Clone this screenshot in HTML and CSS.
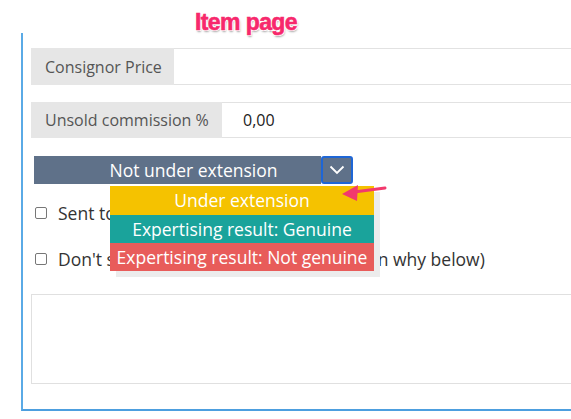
FILE: index.html
```html
<!DOCTYPE html>
<html>
<head>
<meta charset="utf-8">
<link rel="stylesheet" href="styles.css">
</head>
<body>
<div class="title">Item page</div>
<div class="panel">
  <div class="group">
    <div class="addon addon-1">Consignor Price</div>
    <div class="field"></div>
  </div>
  <div class="group group-2">
    <div class="addon addon-2">Unsold commission %</div>
    <div class="field">0,00</div>
  </div>
  <div class="select-wrap">
    <div class="select">
      <div class="select-value">Not under extension</div>
      <div class="select-btn">
        <svg width="16" height="10" viewBox="0 0 16 10"><path d="M1.5 1.5 L8 8 L14.5 1.5" fill="none" stroke="#fff" stroke-width="1.8"/></svg>
      </div>
    </div>
    <div class="menu">
      <div class="opt opt-yellow">Under extension</div>
      <div class="opt opt-teal">Expertising result: Genuine</div>
      <div class="opt opt-red">Expertising result: Not genuine</div>
    </div>
    <svg class="pointer" width="48" height="22" viewBox="0 0 48 22"><path d="M45 6 L14 10" stroke="#f2396d" stroke-width="3" stroke-linecap="round"/><path d="M2 12 L18 3 L17 19 Z" fill="#f2396d"/></svg>
  </div>
  <label class="check check-1"><span class="box"></span>Sent to expertising</label>
  <label class="check check-2"><span class="box"></span>Don't send to expertising (please explain why below)</label>
  <div class="textarea"></div>
</div>
</body>
</html>
```
FILE: styles.css
```css
html, body {
  margin: 0;
  padding: 0;
  background: #fff;
  overflow: hidden;
  width: 571px;
  height: 419px;
}
body {
  font-family: "Open Sans", "Liberation Sans", sans-serif;
}
.title {
  height: 33px;
  padding-left: 195px;
  font-family: "Liberation Sans", Arial, sans-serif;
  font-weight: bold;
  font-size: 23px;
  letter-spacing: -0.6px;
  line-height: 44px;
  color: #f7286c;
  text-shadow: -1px -1px 0 #fff, 1px -1px 0 #fff, -1px 1px 0 #fff, 1px 1px 0 #fff, 1px 2px 2px rgba(0,0,0,0.35);
  -webkit-text-stroke: 0.6px #f7286c;
  position: relative;
  z-index: 2;
}
.panel {
  margin-left: 21px;
  width: 550px;
  height: 378px;
  border-left: 2px solid #5aaae6;
  border-bottom: 2px solid #4d9fdf;
  padding: 15px 0 0 8px;
  box-sizing: border-box;
  position: relative;
}
.group {
  display: flex;
  height: 37px;
}
.group-2 {
  margin-top: 17px;
  height: 36px;
}
.addon {
  background: #e6e6e6;
  color: #555;
  font-size: 16px;
  display: flex;
  align-items: center;
  padding-left: 14px;
  box-sizing: border-box;
}
.addon-1 { width: 143px; }
.addon-2 { width: 191px; }
.field {
  flex: 1;
  border-top: 1px solid #e2e2e2;
  border-bottom: 1px solid #e2e2e2;
  display: flex;
  align-items: center;
  padding-left: 21px;
  font-size: 16px;
  color: #222;
}
.select-wrap {
  position: relative;
  margin-top: 18px;
  margin-left: 3px;
  height: 28px;
}
.select {
  display: flex;
  height: 28px;
}
.select-value {
  width: 287px;
  padding-left: 32px;
  box-sizing: border-box;
  background: #5f7189;
  color: #fff;
  font-size: 17.5px;
  text-align: center;
  line-height: 28px;
  white-space: nowrap;
}
.select-btn {
  width: 32px;
  height: 28px;
  box-sizing: border-box;
  background: #5f7189;
  border: 2px solid #1e66d6;
  border-radius: 3px;
  display: flex;
  align-items: center;
  justify-content: center;
}
.menu {
  position: absolute;
  left: 76px;
  top: 30px;
  width: 264px;
  box-shadow: 6px 6px 0 #ececec;
  z-index: 3;
}
.opt {
  color: #fff;
  font-size: 17.5px;
  text-align: center;
  height: 28.5px;
  line-height: 28px;
  white-space: nowrap;
}
.opt-yellow { background: #f5c200; }
.opt-teal { background: #1aa39b; }
.opt-red { background: #e85c5a; height: 28px; }
.pointer {
  position: absolute;
  left: 306px;
  top: 26px;
  z-index: 4;
}
.check {
  display: flex;
  align-items: center;
  font-size: 17.5px;
  color: #333;
  margin-left: 4px;
  height: 24px;
  white-space: nowrap;
}
.check-1 { margin-top: 17px; }
.check-2 { margin-top: 22px; }
.box {
  width: 10px;
  height: 10px;
  border: 1px solid #777;
  border-radius: 2px;
  margin-right: 11px;
  flex: none;
  background: #fff;
}
.textarea {
  margin-top: 23px;
  height: 90px;
  border: 1px solid #e0e0e0;
  border-right: none;
  box-sizing: border-box;
}
```
